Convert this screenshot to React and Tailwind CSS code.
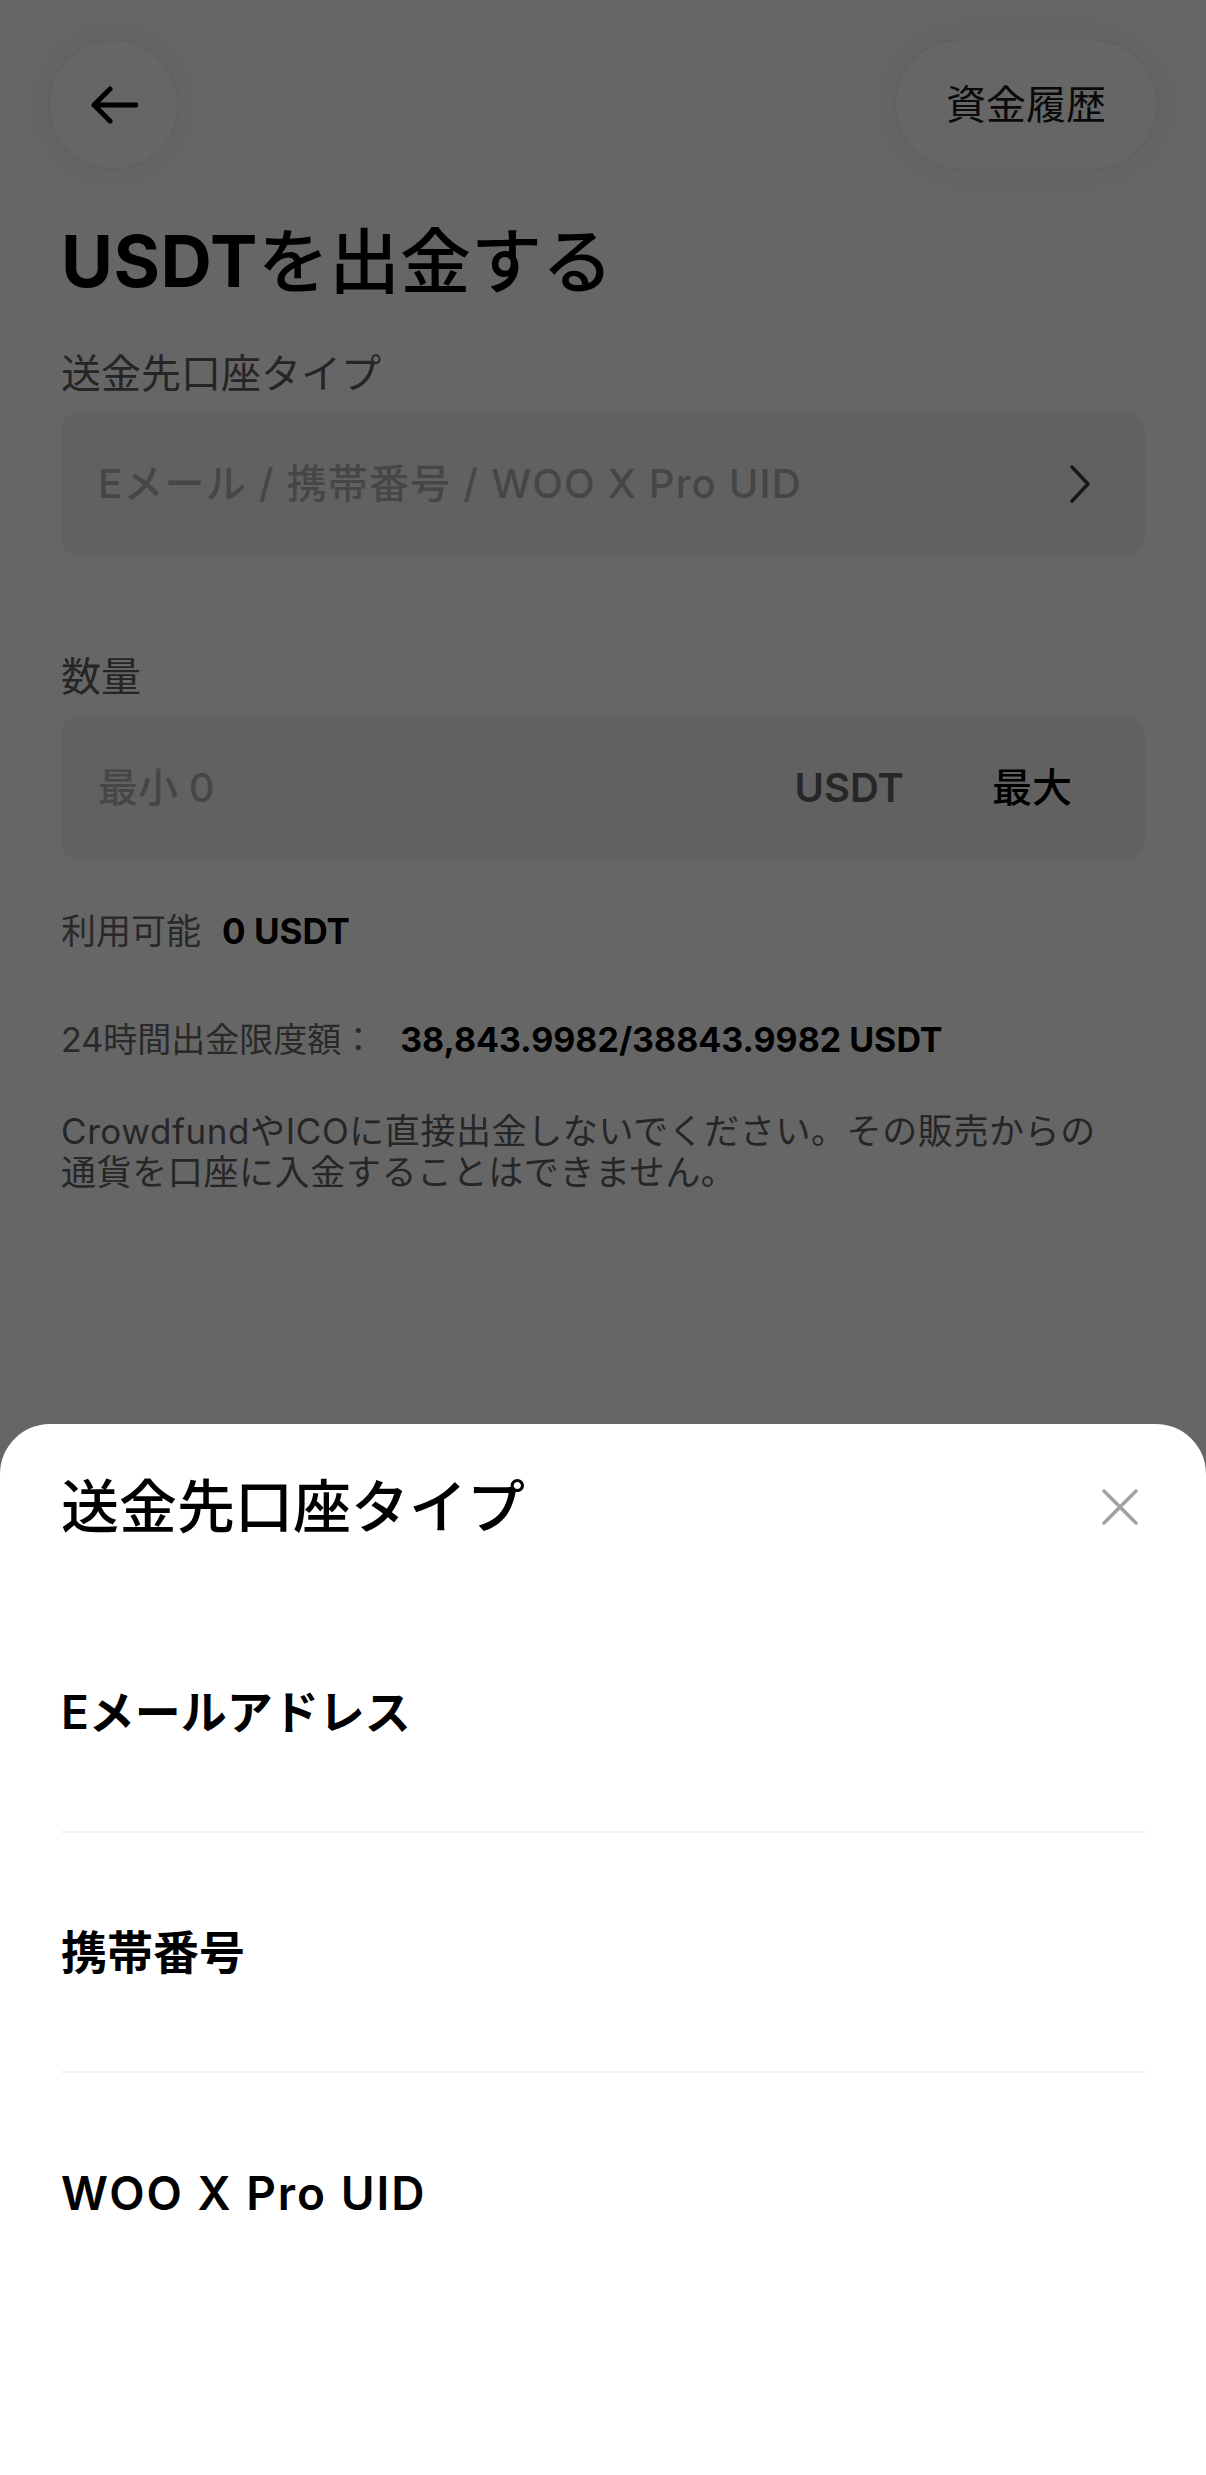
import React from "react";

const font = { fontFamily: '"Inter", "Noto Sans CJK JP", "Noto Sans", sans-serif' };

export default function App() {
  return (
    <div
      className="relative w-full min-h-[2475px] bg-white text-black overflow-hidden"
      style={font}
    >
      {/* Header */}
      <div className="flex items-center justify-between px-[48px] pt-[39px]">
        <button className="flex h-[131px] w-[131px] items-center justify-center rounded-full border-2 border-[#f2f2f2] bg-white shadow-[0_0_50px_rgba(0,0,0,0.07)]">
          <svg width="48" height="40" viewBox="0 0 48 40" fill="none">
            <path
              d="M46 20H4M20 4L4 20L20 36"
              stroke="#000"
              strokeWidth="5"
              strokeLinecap="round"
              strokeLinejoin="round"
            />
          </svg>
        </button>
        <button className="flex h-[131px] w-[264px] items-center justify-center rounded-full border-2 border-[#f2f2f2] bg-white text-[40px] text-[#1a1a1a] shadow-[0_0_50px_rgba(0,0,0,0.07)]">
          資金履歴
        </button>
      </div>

      {/* Content */}
      <div className="px-[61px]">
        <h1 className="mt-[49px] text-[71px] leading-[84px] font-bold">
          <span className="tracking-[0.5px]">USDT</span>
          <span className="font-medium">を出金する</span>
        </h1>

        <div className="mt-[47px] text-[40px] leading-[48px] text-[#5c5c5c]">
          送金先口座タイプ
        </div>
        <div className="mt-[14px] flex h-[144px] items-center justify-between rounded-[18px] bg-[#f3f3f3] pl-[37px] pr-[55px]">
          <span className="text-[40px] font-medium text-[#b0b0b0] tracking-[1.2px]">
            Eメール / 携帯番号 / WOO X Pro UID
          </span>
          <svg width="20" height="38" viewBox="0 0 20 38" fill="none">
            <path
              d="M2 2L18 19L2 36"
              stroke="#3a3a3a"
              strokeWidth="3.5"
              strokeLinecap="round"
              strokeLinejoin="round"
            />
          </svg>
        </div>

        <div className="mt-[97px] text-[40px] leading-[48px] text-[#5c5c5c]">数量</div>
        <div className="mt-[15px] flex h-[144px] items-center rounded-[18px] bg-[#f3f3f3] pl-[37px] pr-[73px]">
          <span className="flex-1 text-[40px] font-medium text-[#b0b0b0]">最小 0</span>
          <span className="text-[40px] font-semibold text-[#636363]">USDT</span>
          <span className="ml-[88px] text-[40px] font-medium text-black">最大</span>
        </div>

        <div className="mt-[50px] flex items-center text-[35px] leading-[42px]">
          <span className="text-[#666]">利用可能</span>
          <span className="ml-[21px] font-bold text-black">0 USDT</span>
        </div>

        <div className="mt-[67px] flex items-center text-[34px] leading-[42px]">
          <span className="text-[#666]">24時間出金限度額：</span>
          <span className="ml-[25px] font-bold text-black">
            38,843.9982/38843.9982 USDT
          </span>
        </div>

        <p className="mt-[50px] text-[35px] leading-[41px] text-[#606060] tracking-[0.6px]">
          CrowdfundやICOに直接出金しないでください。その販売からの
          <br />
          通貨を口座に入金することはできません。
        </p>
      </div>

      {/* Overlay */}
      <div className="absolute inset-0 bg-black/60" />

      {/* Bottom sheet */}
      <div className="absolute inset-x-0 bottom-0 h-[1051px] rounded-t-[50px] bg-white">
        <div className="flex items-center justify-between px-[61px] pt-[48px]">
          <h2 className="text-[58px] leading-[70px] font-medium">送金先口座タイプ</h2>
          <svg className="mr-[7px]" width="36" height="36" viewBox="0 0 36 36" fill="none">
            <path
              d="M2 2L34 34M34 2L2 34"
              stroke="#a1a1a6"
              strokeWidth="3.5"
              strokeLinecap="round"
            />
          </svg>
        </div>
        <div className="mt-[51px] px-[61px]">
          {[
            { t: "Eメールアドレス", c: "" },
            { t: "携帯番号", c: "" },
            { t: "WOO X Pro UID", c: "tracking-[2px]" },
          ].map((r, i) => (
            <div
              key={r.t}
              className={
                i < 2
                  ? "flex h-[240px] items-center border-b-2 border-[#f2f2f2] text-[46px] font-semibold"
                  : "flex h-[240px] items-center text-[46px] font-semibold"
              }
            >
              <span className={r.c}>{r.t}</span>
            </div>
          ))}
        </div>
      </div>
    </div>
  );
}
